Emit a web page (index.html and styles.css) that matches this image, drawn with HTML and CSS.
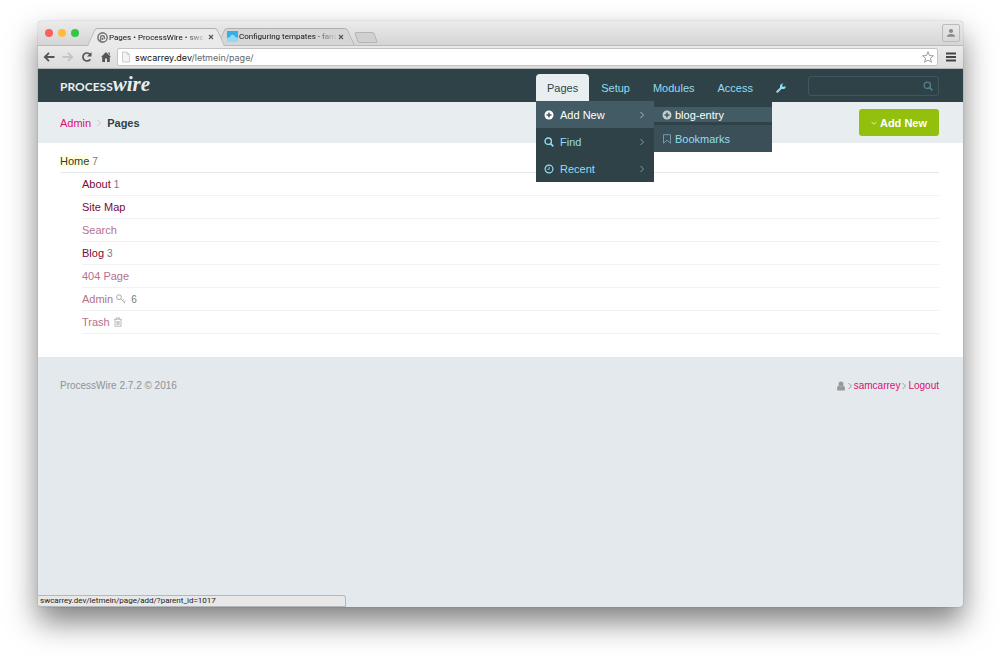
FILE: index.html
```
<!DOCTYPE html>
<html lang="en">
<head>
  <meta charset="UTF-8">
  <meta name="viewport" content="width=device-width, initial-scale=1.0">
  <title>Pages • ProcessWire</title>
  <link rel="stylesheet" href="styles.css">
</head>
<body>
  <div class="window">
    <div class="tabs">
      <div class="lights">
        <button class="light red" aria-label="Close"></button>
        <button class="light yellow" aria-label="Minimize"></button>
        <button class="light green" aria-label="Zoom"></button>
      </div>
      <div class="tab active">
        <svg class="favicon" viewBox="0 0 10 10"><circle cx="5" cy="5" r="4.200" fill="#fff" stroke="#777" stroke-width="1.400"/><path d="M3.200 8.500V5a1.800 1.800 0 0 1 3.600 0v1.500M5 5v2.500" fill="none" stroke="#777" stroke-width="1.400"/></svg>
        <a href="#" class="tab-title">Pages • ProcessWire • swc</a>
        <button class="close" aria-label="Close tab"><svg viewBox="0 0 6 6"><path d="M1 1l4 4M5 1L1 5" stroke="#555" stroke-width="1.1"/></svg></button>
      </div>
      <div class="tab">
        <svg class="favicon" viewBox="0 0 10 10"><path fill="#37aee6" d="M0 0h10v10H0z"/><path fill="#8adcf7" d="M0 10V7c.5-1 1.500-1.500 2.500-1.300C3 4 4 3.400 5 3.400S7.200 4 7.500 5.700C8.800 5.500 9.600 6 10 7v3z"/></svg>
        <a href="#" class="tab-title">Configuring tempates - fam</a>
        <button class="close" aria-label="Close tab"><svg viewBox="0 0 6 6"><path d="M1 1l4 4M5 1L1 5" stroke="#555" stroke-width="1.1"/></svg></button>
      </div>
      <button class="new-tab" aria-label="New tab"></button>
      <button class="profile" aria-label="Profile"><svg viewBox="0 0 10 10"><circle cx="5" cy="3" r="2.100" fill="#888"/><path d="M1 8.800c0-2 1.500-2.800 4-2.800s4 .8 4 2.800z" fill="#888"/></svg></button>
    </div>
    <div class="toolbar">
      <button class="tool" aria-label="Back"><svg viewBox="0 0 12 12"><path d="M11.500 6H2M6 1.800L1.800 6 6 10.200" fill="none" stroke="#555" stroke-width="1.800"/></svg></button>
      <button class="tool" aria-label="Forward"><svg viewBox="0 0 12 12"><path d="M.5 6H10M6 1.800L10.200 6 6 10.200" fill="none" stroke="#c4c4c4" stroke-width="1.800"/></svg></button>
      <button class="tool" aria-label="Reload"><svg viewBox="0 0 12 12"><path d="M9.300 8.200A4 4 0 1 1 9 3.400" fill="none" stroke="#555" stroke-width="1.700"/><path d="M10.500 1v4.500H6z" fill="#555"/></svg></button>
      <button class="tool" aria-label="Home"><svg viewBox="0 0 12 12"><path d="M6 1l5 5H9.800v5H7V7.500H5V11H2.200V6H1zM8 1.500h1.800v3z" fill="#555"/></svg></button>
      <div class="address">
        <svg class="page-icon" viewBox="0 0 10 12"><path d="M1.500 1h4.500l2.500 2.500V11h-7z" fill="#f4f4f4" stroke="#ccc"/><path d="M6 1v2.500h2.500" fill="none" stroke="#ccc"/></svg>
        <a href="#" class="url"><b>swcarrey.dev</b>/letmein/page/</a>
        <button class="star" aria-label="Bookmark"><svg viewBox="0 0 12 12"><path d="M6 .8l1.500 3.700 4 .3-3.100 2.500 1 3.900L6 9.100l-3.400 2.100 1-3.900L.5 4.800l4-.3z" fill="#fff" stroke="#888" stroke-width=".8"/></svg></button>
      </div>
      <button class="tool menu-btn" aria-label="Menu"><svg viewBox="0 0 12 12"><path d="M1 2.500h10M1 6h10M1 9.500h10" stroke="#444" stroke-width="2"/></svg></button>
    </div>

    <header class="masthead">
      <a href="#" class="logo">PROCESS<i>wire</i></a>
      <nav>
        <ul class="topnav">
          <li class="open">
            <a href="#">Pages</a>
            <ul class="dropdown">
              <li class="hover">
                <a href="#">
                  <svg class="icon" viewBox="0 0 10 10"><circle cx="5" cy="5" r="4.500" fill="#fff"/><path d="M5 2.500v5M2.500 5h5" stroke="#425b65" stroke-width="1.500"/></svg>
                  <span>Add New</span>
                  <svg class="arrow" viewBox="0 0 4 8"><path d="M.5 1l3 3-3 3" fill="none" stroke="#a9bbc2"/></svg>
                </a>
                <ul class="submenu">
                  <li class="hover">
                    <a href="#">
                      <svg class="icon" viewBox="0 0 10 10"><circle cx="5" cy="5" r="4.500" fill="#c3ced2"/><path d="M5 2.500v5M2.500 5h5" stroke="#425b65" stroke-width="1.500"/></svg>
                      <span>blog-entry</span>
                    </a>
                  </li>
                  <li class="bookmarks">
                    <a href="#">
                      <svg class="icon" viewBox="0 0 10 10"><path d="M1.500 .7h7v8.500L5 6.200 1.500 9.200z" fill="none" stroke="#7fa3b0" stroke-width=".9"/></svg>
                      <span>Bookmarks</span>
                    </a>
                  </li>
                </ul>
              </li>
              <li>
                <a href="#">
                  <svg class="icon" viewBox="0 0 10 10"><circle cx="4.200" cy="4.200" r="3.200" fill="none" stroke="#93dcf3" stroke-width="1.400"/><path d="M6.500 6.500l2.800 2.800" stroke="#93dcf3" stroke-width="1.700"/></svg>
                  <span>Find</span>
                  <svg class="arrow" viewBox="0 0 4 8"><path d="M.5 1l3 3-3 3" fill="none" stroke="#7f99a3"/></svg>
                </a>
              </li>
              <li>
                <a href="#">
                  <svg class="icon" viewBox="0 0 10 10"><circle cx="5" cy="5" r="3.900" fill="none" stroke="#93dcf3" stroke-width="1.200"/><path d="M5.200 2.800v2.500H3.400" fill="none" stroke="#93dcf3" stroke-width=".9"/></svg>
                  <span>Recent</span>
                  <svg class="arrow" viewBox="0 0 4 8"><path d="M.5 1l3 3-3 3" fill="none" stroke="#7f99a3"/></svg>
                </a>
              </li>
            </ul>
          </li>
          <li><a href="#">Setup</a></li>
          <li><a href="#">Modules</a></li>
          <li><a href="#">Access</a></li>
          <li><a href="#" aria-label="Tools"><svg class="icon" viewBox="0 0 10 10"><path d="M1.300 8.700l4-4" stroke="#93dcf3" stroke-width="2" stroke-linecap="round"/><path d="M9.600 3.100A2.800 2.800 0 1 1 7.300.5L6.100 2l.3 1.400 1.400.4z" fill="#93dcf3"/></svg></a></li>
        </ul>
      </nav>
      <form class="search">
        <input type="text" aria-label="Search">
        <button type="button" aria-label="Search"><svg class="icon" viewBox="0 0 10 10"><circle cx="4.300" cy="4.300" r="3.200" fill="none" stroke="#57808f" stroke-width="1.300"/><path d="M6.600 6.600l2.800 2.800" stroke="#57808f" stroke-width="1.500"/></svg></button>
      </form>
    </header>

    <div class="headline">
      <div class="breadcrumb">
        <a href="#">Admin</a>
        <svg class="arrow" viewBox="0 0 4 8"><path d="M.5 1l3 3-3 3" fill="none" stroke="#e3b4cb"/></svg>
        <b>Pages</b>
      </div>
      <button class="add">
        <svg viewBox="0 0 6 6"><path d="M.5 1.800L3 4.300l2.500-2.500" fill="none" stroke="#e3f0bb"/></svg>
        Add New
      </button>
    </div>

    <main class="content">
      <div class="row home"><a href="#">Home</a><span class="num">7</span></div>
      <ul class="children">
        <li class="row"><a href="#">About</a><span class="num">1</span></li>
        <li class="row"><a href="#">Site Map</a></li>
        <li class="row hidden"><a href="#">Search</a></li>
        <li class="row"><a href="#">Blog</a><span class="num">3</span></li>
        <li class="row hidden"><a href="#">404 Page</a></li>
        <li class="row hidden">
          <a href="#">Admin</a>
          <svg class="icon" viewBox="0 0 10 10"><circle cx="3" cy="3.200" r="2.400" fill="none" stroke="#aaa"/><path d="M4.800 5l4.200 4.200M6.300 6.700l1.500-1.500M8 8.300L9.600 6.800" fill="none" stroke="#aaa"/></svg>
          <span class="num">6</span>
        </li>
        <li class="row hidden">
          <a href="#">Trash</a>
          <svg class="icon" viewBox="0 0 10 10"><path d="M1 2.300h8M3.500 2V.8h3V2M2 2.500v6.800h6V2.500M4 4v4M5 4v4M6 4v4" fill="none" stroke="#aaa" stroke-width=".8"/></svg>
        </li>
      </ul>
    </main>

    <footer class="footer">
      <p>ProcessWire 2.7.2 © 2016</p>
      <div class="user">
        <svg class="icon" viewBox="0 0 10 10"><circle cx="5" cy="3" r="2.500" fill="#999"/><path d="M1 8c0-2 .8-3.200 2-3.200 1.200 1 2.800 1 4 0C8.200 4.800 9 6 9 8c0 1-.5 1.500-1.300 1.500H2.300C1.500 9.500 1 9 1 8z" fill="#999"/></svg>
        <svg class="arrow" viewBox="0 0 4 8"><path d="M.5 1l3 3-3 3" fill="none" stroke="#999"/></svg>
        <a href="#">samcarrey</a>
        <svg class="arrow" viewBox="0 0 4 8"><path d="M.5 1l3 3-3 3" fill="none" stroke="#999"/></svg>
        <a href="#">Logout</a>
      </div>
    </footer>
    <div class="status">swcarrey.dev/letmein/page/add/?parent_id=1017</div>
  </div>
</body>
</html>
```
FILE: styles.css
```
*{
  box-sizing: border-box;
  margin: 0;
  padding: 0;
}
body{
  display: flex;
  min-height: 100vh;
  padding: 21px 37px 54px 38px;
  background: #fff;
  font-family: "Liberation Sans", Arial, sans-serif;
  font-size: 11px;
}
a{
  text-decoration: none;
}
ul{
  list-style: none;
}
button{
  border: 0;
  background: none;
  font-family: inherit;
}
svg{
  display: block;
  flex: none;
}
.icon{
  width: 10px;
  height: 10px;
}
.arrow{
  width: 4px;
  height: 8px;
}
.window{
  position: relative;
  display: flex;
  flex-direction: column;
  flex: 1;
  border-radius: 4px 4px 3px 3px;
  background: #e3e9ed;
  box-shadow: 0 0 1px rgba(0,0,0,.5), 0 15px 30px rgba(0,0,0,.5);
}

/* browser tabs */
.tabs{
  display: flex;
  align-items: flex-end;
  height: 25px;
  border-bottom: 1px solid #b9b9b9;
  border-radius: 4px 4px 0 0;
  background: linear-gradient(#ebebeb, #d5d5d5);
  font-family: Roboto, sans-serif;
  font-size: 8px;
}
.lights{
  display: flex;
  gap: 5px;
  align-self: center;
  width: 53px;
  padding-left: 7px;
}
.light{
  width: 8px;
  height: 8px;
  border-radius: 50%;
}
.red{
  background: #fc605b;
}
.yellow{
  background: #fdbc40;
}
.green{
  background: #33c748;
}
.tab{
  position: relative;
  z-index: 1;
  display: flex;
  align-items: center;
  width: 130px;
  height: 17px;
  padding: 0 7px 0 6px;
}
.tab::before, .tab::after{
  content: "";
  position: absolute;
  z-index: -1;
  top: 0;
  bottom: 0;
  width: 60%;
  border-top: 1px solid #b0b0b0;
  background: #d6d6d6;
}
.tab::before{
  left: 0;
  border-left: 1px solid #b0b0b0;
  border-top-left-radius: 3px;
  transform: skewX(-24deg);
}
.tab::after{
  right: 0;
  border-right: 1px solid #b0b0b0;
  border-top-right-radius: 3px;
  transform: skewX(24deg);
}
.active{
  z-index: 2;
  height: 18px;
  margin-bottom: -1px;
}
.active::before, .active::after{
  background: #eaeaea;
}
.favicon{
  width: 11px;
  height: 11px;
}
.tab-title{
  flex: 1;
  margin-left: 1px;
  color: #111;
  white-space: nowrap;
  -webkit-mask-image: linear-gradient(to right, #000 75%, transparent);
  mask-image: linear-gradient(to right, #000 75%, transparent);
}
.close svg{
  width: 6px;
  height: 6px;
}
.new-tab{
  align-self: center;
  width: 20px;
  height: 11px;
  margin: 8px 0 0 5px;
  border: 1px solid #b5b5b5;
  border-radius: 2px;
  background: #d0d0d0;
  transform: skewX(20deg);
}
.profile{
  align-self: center;
  width: 18px;
  height: 18px;
  margin: 0 3px 0 auto;
  padding: 3px;
  border: 1px solid #bbb;
  border-radius: 2px;
}
.toolbar{
  display: flex;
  align-items: center;
  gap: 7px;
  height: 23px;
  padding: 0 6px 0 5px;
  border-bottom: 1px solid #b5b5b5;
  background: linear-gradient(#eaeaea, #dcdcdc);
}
.tool svg, .star svg{
  width: 12px;
  height: 12px;
}
.address{
  display: flex;
  flex: 1;
  align-items: center;
  height: 18px;
  margin-left: -2px;
  padding: 0 3px;
  border: 1px solid #c4c4c4;
  border-radius: 2px;
  background: #fff;
}
.page-icon{
  width: 10px;
  height: 12px;
}
.url{
  flex: 1;
  margin-left: 4px;
  color: #666;
  font-family: Inter, sans-serif;
  font-size: 9px;
}
.url b{
  color: #111;
  font-weight: 400;
}

/* masthead */
.masthead{
  display: flex;
  height: 33px;
  padding: 5px 24px 0 22px;
  background: #2f4248;
}
.logo{
  display: flex;
  align-items: baseline;
  margin-right: auto;
  color: #e8eef0;
  font-family: Lato, sans-serif;
  font-size: 12px;
  font-weight: 700;
  line-height: 20px;
}
.logo i{
  font-family: "Liberation Serif", serif;
  font-size: 21px;
}
.topnav{
  display: flex;
  gap: 1px;
}
.topnav > li{
  position: relative;
}
.topnav a{
  display: flex;
  align-items: center;
  height: 27px;
  padding: 0 11px;
  color: #93dcf3;
}
.topnav > .open > a{
  border-radius: 4px 4px 0 0;
  background: #e9eff1;
  color: #2f4248;
}
.dropdown{
  position: absolute;
  z-index: 5;
  top: 27px;
  left: 0;
  width: 118px;
  background: #2f4248;
}
.dropdown li{
  position: relative;
}
.topnav .dropdown a{
  gap: 6px;
  padding: 0 10px 0 8px;
}
.dropdown span{
  flex: 1;
}
.dropdown .hover{
  background: #425b65;
}
.topnav .hover > a{
  color: #fff;
}
.submenu{
  position: absolute;
  top: 0;
  left: 118px;
  width: 118px;
  padding-top: 6px;
  background: #2f4248;
}
.topnav .submenu a{
  gap: 3px;
}
.topnav .submenu .hover a{
  height: 15px;
}
.submenu .bookmarks{
  margin-top: 3px;
  background: #3a4f57;
}
.search{
  display: flex;
  align-items: center;
  width: 131px;
  height: 20px;
  margin: 2px 0 0 11px;
  padding-right: 5px;
  border: 1px solid #3f5760;
  border-radius: 3px;
}
.search input{
  flex: 1;
  min-width: 0;
  border: 0;
  outline: 0;
  background: none;
  color: #fff;
}

/* headline */
.headline{
  display: flex;
  align-items: center;
  justify-content: space-between;
  padding: 7px 24px 7px 22px;
  background: #e8eef0;
}
.breadcrumb{
  display: flex;
  align-items: center;
  gap: 6px;
  color: #2f4248;
}
.breadcrumb a, .user a{
  color: #db1174;
}
.add{
  display: flex;
  align-items: center;
  gap: 3px;
  height: 27px;
  padding: 0 12px;
  border-radius: 3px;
  background: #93bf0d;
  color: #fff;
  font-size: 11px;
  font-weight: 700;
}
.add svg{
  width: 6px;
  height: 6px;
}

/* page list */
.content{
  padding: 7px 24px 23px 22px;
  background: #fff;
}
.row{
  display: flex;
  align-items: center;
  gap: 3px;
  height: 23px;
  border-bottom: 1px solid #f0f2f3;
}
.row a{
  color: #7a0a36;
}
.row.hidden a{
  color: #b5718b;
}
.home{
  border-color: #e3e9ec;
}
.row.home a{
  background: #ffffdd;
  color: #2f3a33;
}
.num{
  color: #777;
  font-size: 10px;
}
.children{
  padding-left: 22px;
}
.hidden .num{
  margin-left: 2px;
}

.footer{
  display: flex;
  align-items: center;
  justify-content: space-between;
  padding: 23px 24px 22px 22px;
  color: #8d9396;
  font-size: 10px;
}
.user{
  display: flex;
  align-items: center;
  gap: 2px;
}
.status{
  position: absolute;
  bottom: 0;
  left: 0;
  width: 308px;
  padding: 0 2px;
  border: 1px solid #b5b8ba;
  border-left: 0;
  border-radius: 0 3px 0 3px;
  background: #e8e8e8;
  color: #222;
  font-family: Roboto, sans-serif;
  font-size: 8px;
  line-height: 10px;
}
```
